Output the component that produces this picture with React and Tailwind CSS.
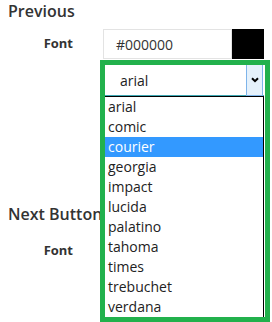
const fonts = ["arial", "comic", "courier", "georgia", "impact", "lucida", "palatino", "tahoma", "times", "trebuchet", "verdana"];

function FontRow({ children }) {
  return (
    <div className="flex items-start">
      <div className="w-[73px] h-[30px] flex items-center justify-end text-[13px] font-bold text-[#333]">Font</div>
      <div className="ml-[30px]">{children}</div>
    </div>
  );
}

export default function App() {
  const selected = "courier";

  return (
    <div className="relative w-[272px] h-[322px] overflow-hidden bg-white font-['Open_Sans',sans-serif] text-[#333]">
      <h2 className="pl-2 text-[16px] leading-[22px] font-semibold">Previous</h2>
      <div className="mt-[7px]">
        <FontRow>
          <div className="flex w-[161px] h-[30px]">
            <div className="flex-1 border border-[#e3e3e3] flex items-center pl-[12px] text-[14px] text-[#333]">#000000</div>
            <div className="w-[32px] bg-black" />
          </div>
          <div className="relative mt-[6px] w-[161px] h-[31px] bg-white border-b border-[#3fa8b4]">
            <div className="h-full flex items-center pl-[17px] text-[14px] text-[#222]">arial</div>
            <div className="absolute right-[1px] top-[-1px] w-[17px] h-[32px] bg-[#e5f1fb] border border-[#7eb4ea] flex items-center justify-center">
              <svg width="8" height="6" viewBox="0 0 8 6">
                <path d="M1 1.2l3 3 3-3" fill="none" stroke="#000" strokeWidth="2" />
              </svg>
            </div>
            <ul className="absolute left-0 top-[31px] w-[161px] border border-black bg-white z-10">
              {fonts.map((f) => (
                <li
                  key={f}
                  className={
                    f === selected
                      ? "h-[20px] leading-[20px] pl-[4px] text-[14px] bg-[#3399ff] text-white"
                      : "h-[20px] leading-[20px] pl-[4px] text-[14px] text-[#222]"
                  }
                >
                  {f}
                </li>
              ))}
            </ul>
          </div>
        </FontRow>
      </div>
      <h2 className="mt-[107px] pl-2 text-[16px] leading-[22px] font-semibold">Next Button</h2>
      <div className="mt-[11px]">
        <FontRow />
      </div>
      <div className="absolute left-[100px] top-[60px] w-[170px] h-[262px] border-[5px] border-[#22b14c] z-20 pointer-events-none" />
    </div>
  );
}
